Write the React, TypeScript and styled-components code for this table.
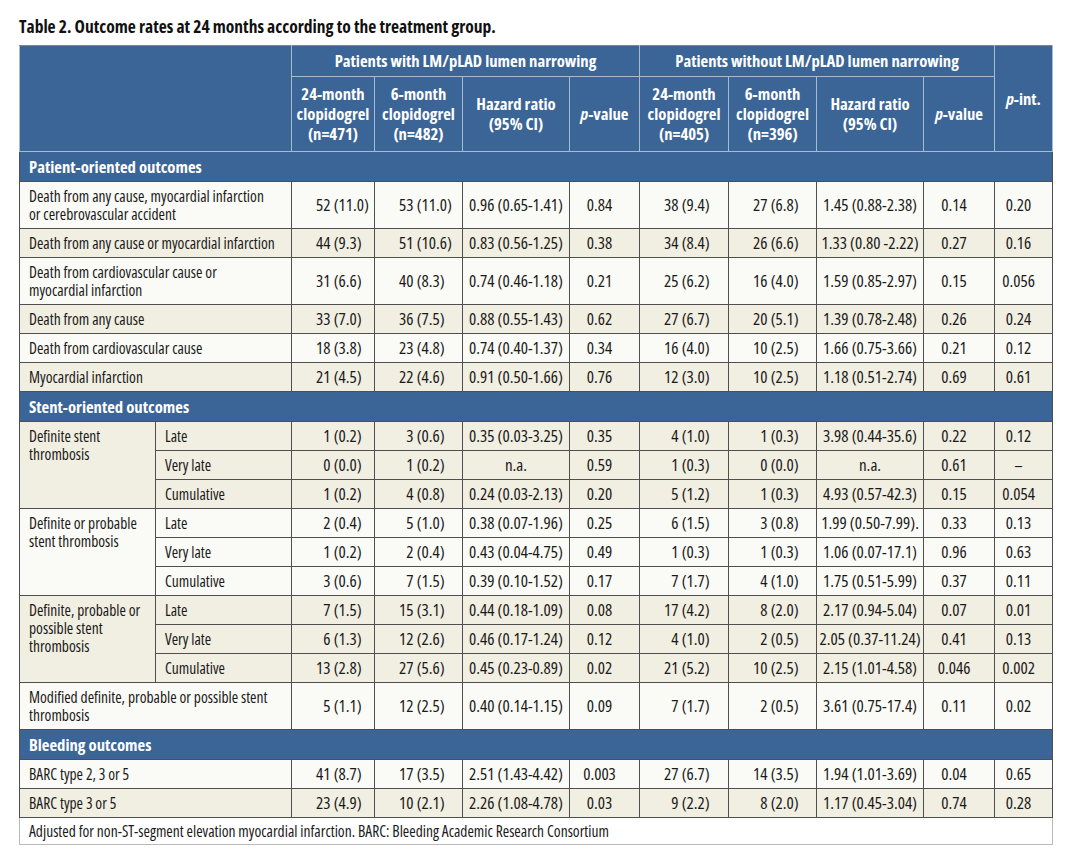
import React from "react"
import styled, { createGlobalStyle } from "styled-components"

const BLUE = "#3b6596"
const GRID = "#4f4f4f"
const HEAD_GRID = "#a9bbd1"

const GlobalStyle = createGlobalStyle`
	html, body {
		margin: 0;
		padding: 0;
		background: #ffffff;
	}
	body {
		font-family: "Open Sans", "Roboto", "Liberation Sans", sans-serif;
		font-stretch: 75%;
		color: #1a1a1a;
	}
`

type Tint = "light" | "beige"

type Line = { label: string; values: string[] }
type Group = { label: string; lines: Line[] }
type Item = { tint: Tint; line?: Line; group?: Group }
type Section = { title: string; items: Item[] }

const sections: Section[] = [
	{
		title: "Patient-oriented outcomes",
		items: [
			{ tint: "light", line: { label: "Death from any cause, myocardial infarction or cerebrovascular accident", values: ["52 (11.0)", "53 (11.0)", "0.96 (0.65-1.41)", "0.84", "38 (9.4)", "27 (6.8)", "1.45 (0.88-2.38)", "0.14", "0.20"] } },
			{ tint: "beige", line: { label: "Death from any cause or myocardial infarction", values: ["44 (9.3)", "51 (10.6)", "0.83 (0.56-1.25)", "0.38", "34 (8.4)", "26 (6.6)", "1.33 (0.80 -2.22)", "0.27", "0.16"] } },
			{ tint: "light", line: { label: "Death from cardiovascular cause or myocardial infarction", values: ["31 (6.6)", "40 (8.3)", "0.74 (0.46-1.18)", "0.21", "25 (6.2)", "16 (4.0)", "1.59 (0.85-2.97)", "0.15", "0.056"] } },
			{ tint: "beige", line: { label: "Death from any cause", values: ["33 (7.0)", "36 (7.5)", "0.88 (0.55-1.43)", "0.62", "27 (6.7)", "20 (5.1)", "1.39 (0.78-2.48)", "0.26", "0.24"] } },
			{ tint: "light", line: { label: "Death from cardiovascular cause", values: ["18 (3.8)", "23 (4.8)", "0.74 (0.40-1.37)", "0.34", "16 (4.0)", "10 (2.5)", "1.66 (0.75-3.66)", "0.21", "0.12"] } },
			{ tint: "beige", line: { label: "Myocardial infarction", values: ["21 (4.5)", "22 (4.6)", "0.91 (0.50-1.66)", "0.76", "12 (3.0)", "10 (2.5)", "1.18 (0.51-2.74)", "0.69", "0.61"] } },
		],
	},
	{
		title: "Stent-oriented outcomes",
		items: [
			{
				tint: "beige",
				group: {
					label: "Definite stent thrombosis",
					lines: [
						{ label: "Late", values: ["1 (0.2)", "3 (0.6)", "0.35 (0.03-3.25)", "0.35", "4 (1.0)", "1 (0.3)", "3.98 (0.44-35.6)", "0.22", "0.12"] },
						{ label: "Very late", values: ["0 (0.0)", "1 (0.2)", "n.a.", "0.59", "1 (0.3)", "0 (0.0)", "n.a.", "0.61", "–"] },
						{ label: "Cumulative", values: ["1 (0.2)", "4 (0.8)", "0.24 (0.03-2.13)", "0.20", "5 (1.2)", "1 (0.3)", "4.93 (0.57-42.3)", "0.15", "0.054"] },
					],
				},
			},
			{
				tint: "light",
				group: {
					label: "Definite or probable stent thrombosis",
					lines: [
						{ label: "Late", values: ["2 (0.4)", "5 (1.0)", "0.38 (0.07-1.96)", "0.25", "6 (1.5)", "3 (0.8)", "1.99 (0.50-7.99).", "0.33", "0.13"] },
						{ label: "Very late", values: ["1 (0.2)", "2 (0.4)", "0.43 (0.04-4.75)", "0.49", "1 (0.3)", "1 (0.3)", "1.06 (0.07-17.1)", "0.96", "0.63"] },
						{ label: "Cumulative", values: ["3 (0.6)", "7 (1.5)", "0.39 (0.10-1.52)", "0.17", "7 (1.7)", "4 (1.0)", "1.75 (0.51-5.99)", "0.37", "0.11"] },
					],
				},
			},
			{
				tint: "beige",
				group: {
					label: "Definite, probable or possible stent thrombosis",
					lines: [
						{ label: "Late", values: ["7 (1.5)", "15 (3.1)", "0.44 (0.18-1.09)", "0.08", "17 (4.2)", "8 (2.0)", "2.17 (0.94-5.04)", "0.07", "0.01"] },
						{ label: "Very late", values: ["6 (1.3)", "12 (2.6)", "0.46 (0.17-1.24)", "0.12", "4 (1.0)", "2 (0.5)", "2.05 (0.37-11.24)", "0.41", "0.13"] },
						{ label: "Cumulative", values: ["13 (2.8)", "27 (5.6)", "0.45 (0.23-0.89)", "0.02", "21 (5.2)", "10 (2.5)", "2.15 (1.01-4.58)", "0.046", "0.002"] },
					],
				},
			},
			{ tint: "light", line: { label: "Modified definite, probable or possible stent thrombosis", values: ["5 (1.1)", "12 (2.5)", "0.40 (0.14-1.15)", "0.09", "7 (1.7)", "2 (0.5)", "3.61 (0.75-17.4)", "0.11", "0.02"] } },
		],
	},
	{
		title: "Bleeding outcomes",
		items: [
			{ tint: "light", line: { label: "BARC type 2, 3 or 5", values: ["41 (8.7)", "17 (3.5)", "2.51 (1.43-4.42)", "0.003", "27 (6.7)", "14 (3.5)", "1.94 (1.01-3.69)", "0.04", "0.65"] } },
			{ tint: "beige", line: { label: "BARC type 3 or 5", values: ["23 (4.9)", "10 (2.1)", "2.26 (1.08-4.78)", "0.03", "9 (2.2)", "8 (2.0)", "1.17 (0.45-3.04)", "0.74", "0.28"] } },
		],
	},
]

// columns holding "n (%)" counts, lined up on the number
const countCols = [0, 1, 4, 5]
// p-value columns sit a little left of centre
const pCols = [3, 7, 8]
const colWidths = [136, 136, 83, 88, 107, 70, 89, 88, 107, 71, 58]

const Page = styled.div`
	padding: 15px 0 0 19px;
`

const Title = styled.h1`
	margin: 0 0 8px;
	font-size: 17.5px;
	line-height: 22px;
	font-weight: 700;
	color: #111;
`

const Table = styled.table`
	border-collapse: collapse;
	table-layout: fixed;
	width: 1034px;
	border: 1px solid #6f6f6f;
`

const HeadCell = styled.th<{ $tall?: boolean }>`
	background: ${BLUE};
	color: #ffffff;
	font-size: 16.7px;
	font-weight: 700;
	text-align: center;
	vertical-align: middle;
	border: 1px solid ${HEAD_GRID};
	border-top-color: #7d8793;
	padding: ${(p) => (p.$tall ? "7px 2px" : "5px 2px")};
	line-height: 20px;
`

const SectionCell = styled.td`
	background: ${BLUE};
	color: #ffffff;
	font-size: 16.7px;
	font-weight: 700;
	line-height: 19px;
	padding: 5px 9px;
	border: 1px solid ${GRID};
`

const Row = styled.tr<{ $tint: Tint }>`
	background: ${(p) => (p.$tint === "beige" ? "#f1eee2" : "#fafaf6")};
`

const LabelCell = styled.td<{ $top?: boolean; $wide?: boolean }>`
	font-size: 15.5px;
	line-height: 18px;
	padding: 5px ${(p) => (p.$wide ? "16px" : "6px")} 5px 9px;
	text-align: left;
	vertical-align: ${(p) => (p.$top ? "top" : "middle")};
	border: 1px solid ${GRID};
`

const ValueCell = styled.td<{ $shift?: boolean }>`
	font-size: 17px;
	line-height: 18px;
	padding: 5px ${(p) => (p.$shift ? "10px 5px 0" : "1px 5px 1px")};
	text-align: center;
	vertical-align: middle;
	border: 1px solid ${GRID};
	white-space: nowrap;
`

const CountCell = styled.td`
	font-size: 17px;
	line-height: 18px;
	padding: 5px 0 5px 23px;
	vertical-align: middle;
	border: 1px solid ${GRID};
	white-space: nowrap;
`

const Count = styled.span`
	display: inline-block;
	width: 15.5px;
	text-align: right;
`

const NoteCell = styled.td`
	background: #ffffff;
	font-size: 15.5px;
	line-height: 18px;
	padding: 4px 9px;
	border: 1px solid #b9b9b9;
`

const Italic = styled.i`
	font-style: italic;
`

const Values = ({ values }: { values: string[] }) => (
	<>
		{values.map((v, i) => {
			if (countCols.includes(i)) {
				const [n, ...rest] = v.split(" ")
				return (
					<CountCell key={i}>
						<Count>{n}</Count>&nbsp;{rest.join(" ")}
					</CountCell>
				)
			}
			return (
				<ValueCell key={i} $shift={pCols.includes(i)}>
					{v}
				</ValueCell>
			)
		})}
	</>
)

const PHead = ({ label }: { label: string }) => (
	<>
		<Italic>p</Italic>
		{label}
	</>
)

export default function App() {
	return (
		<>
			<GlobalStyle />
			<Page>
				<Title>Table 2. Outcome rates at 24 months according to the treatment group.</Title>
				<Table>
					<colgroup>
						{colWidths.map((w, i) => (
							<col key={i} style={{ width: w }} />
						))}
					</colgroup>
					<thead>
						<tr>
							<HeadCell colSpan={2} rowSpan={2} />
							<HeadCell colSpan={4}>Patients with LM/pLAD lumen narrowing</HeadCell>
							<HeadCell colSpan={4}>Patients without LM/pLAD lumen narrowing</HeadCell>
							<HeadCell rowSpan={2}>
								<PHead label="-int." />
							</HeadCell>
						</tr>
						<tr>
							<HeadCell $tall>24-month<br />clopidogrel<br />(n=471)</HeadCell>
							<HeadCell $tall>6-month<br />clopidogrel<br />(n=482)</HeadCell>
							<HeadCell $tall>Hazard ratio<br />(95% CI)</HeadCell>
							<HeadCell $tall><PHead label="-value" /></HeadCell>
							<HeadCell $tall>24-month<br />clopidogrel<br />(n=405)</HeadCell>
							<HeadCell $tall>6-month<br />clopidogrel<br />(n=396)</HeadCell>
							<HeadCell $tall>Hazard ratio<br />(95% CI)</HeadCell>
							<HeadCell $tall><PHead label="-value" /></HeadCell>
						</tr>
					</thead>
					<tbody>
						{sections.map((s) => (
							<React.Fragment key={s.title}>
								<tr>
									<SectionCell colSpan={11}>{s.title}</SectionCell>
								</tr>
								{s.items.map((item, k) => {
									if (item.line) {
										return (
											<Row key={k} $tint={item.tint}>
												<LabelCell colSpan={2} $wide>
													{item.line.label}
												</LabelCell>
												<Values values={item.line.values} />
											</Row>
										)
									}
									const g = item.group!
									return g.lines.map((l, j) => (
										<Row key={`${k}-${j}`} $tint={item.tint}>
											{j === 0 && (
												<LabelCell rowSpan={g.lines.length} $top>
													{g.label}
												</LabelCell>
											)}
											<LabelCell>{l.label}</LabelCell>
											<Values values={l.values} />
										</Row>
									))
								})}
							</React.Fragment>
						))}
						<tr>
							<NoteCell colSpan={11}>
								Adjusted for non-ST-segment elevation myocardial infarction. BARC: Bleeding Academic Research Consortium
							</NoteCell>
						</tr>
					</tbody>
				</Table>
			</Page>
		</>
	)
}
